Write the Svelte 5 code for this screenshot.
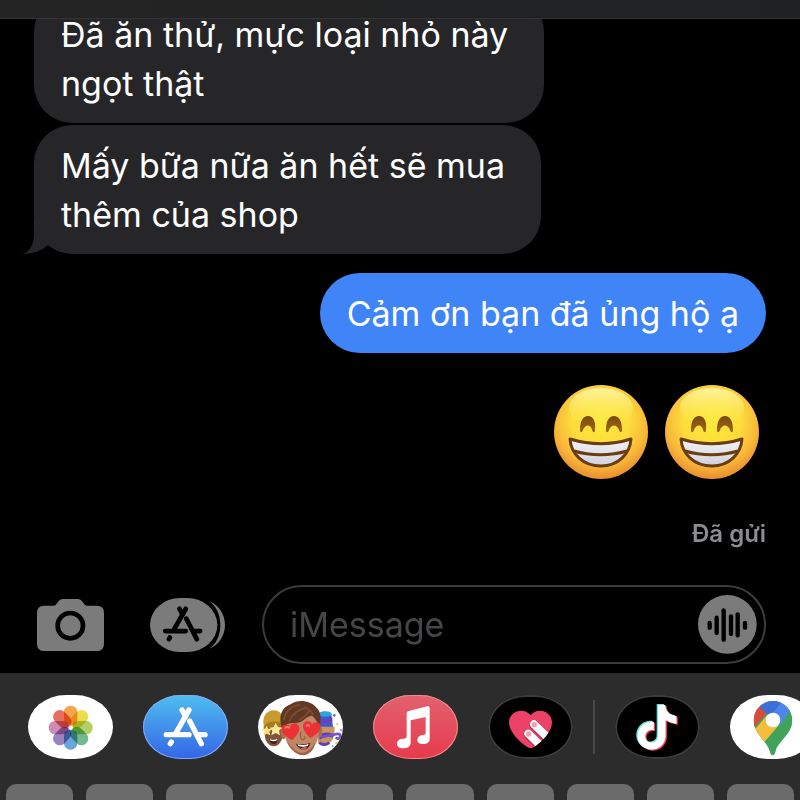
<script>
    const messages = [
        { from: 'them', lines: ['Đã ăn thử, mực loại nhỏ này', 'ngọt thật'] },
        { from: 'them', lines: ['Mấy bữa nữa ăn hết sẽ mua', 'thêm của shop'], tail: true },
        { from: 'me', lines: ['Cảm ơn bạn đã ủng hộ ạ'] }
    ];

    const petals = ['#f59a36', '#ecd93c', '#abca58', '#62b283', '#5b9bd5', '#8e76b4', '#c87fae', '#e65f4c'];

    // x, top, bottom of each bar in the audio glyph
    const wave = [[35, 84, 98], [56, 68, 114], [77, 46, 134], [99, 64, 117], [119, 58, 121], [141, 84, 98]];

    const keys = 'QWERTYUIOP'.split('');

    const note = 'M12.525.02c1.31-.02 2.61-.01 3.91-.02.08 1.53.63 3.09 1.75 4.17 1.12 1.11 2.7 1.62 4.24 1.79v4.03c-1.44-.05-2.89-.35-4.2-.97-.57-.26-1.1-.59-1.62-.93-.01 2.92.01 5.84-.02 8.75-.08 1.4-.54 2.79-1.35 3.94-1.31 1.92-3.58 3.17-5.91 3.21-1.43.08-2.86-.31-4.08-1.03-2.02-1.19-3.44-3.37-3.65-5.71-.02-.5-.03-1-.01-1.49.18-1.9 1.12-3.72 2.58-4.96 1.66-1.44 3.98-2.13 6.15-1.72.02 1.48-.04 2.96-.04 4.44-.99-.32-2.15-.23-3.02.37-.63.41-1.11 1.04-1.36 1.75-.21.51-.15 1.07-.14 1.61.24 1.64 1.82 3.02 3.5 2.87 1.12-.01 2.19-.66 2.77-1.61.19-.33.4-.67.41-1.06.1-1.79.06-3.57.07-5.36.01-4.03-.01-8.05.02-12.07z';
    const heart = 'M0 22C-8 16-24 4-24-9C-24-18-18-23-12-23C-6-23-2-20 0-15C2-20 6-23 12-23C18-23 24-18 24-9C24 4 8 16 0 22Z';

    let draft = $state('');
</script>

{#snippet storeMark()}
    <g fill="none" stroke="currentColor" stroke-width="16" stroke-linecap="round">
        <path d="M138 45L100 112" />
        <path d="M117 45L128 64" />
        <path d="M140 78L175 146" />
        <path d="M70 119H138" />
        <path d="M168 119H186" />
        <path d="M85 141L82 146" />
    </g>
{/snippet}

{#snippet grin()}
    <svg class="grin" viewBox="0 0 94 94" role="img" aria-label="😁">
        <defs>
            <radialGradient id="face" cx="50%" cy="38%" r="62%">
                <stop offset="0" stop-color="#fde93a" />
                <stop offset="0.5" stop-color="#fddc3c" />
                <stop offset="0.78" stop-color="#f8b838" />
                <stop offset="1" stop-color="#e98c30" />
            </radialGradient>
            <linearGradient id="shine" x2="0" y2="1">
                <stop offset="0" stop-color="#fff8b8" stop-opacity="0.8" />
                <stop offset="1" stop-color="#ffee4a" stop-opacity="0" />
            </linearGradient>
            <linearGradient id="eye" x2="0" y2="1">
                <stop offset="0" stop-color="#7a4a0e" />
                <stop offset="1" stop-color="#a0661a" />
            </linearGradient>
            <linearGradient id="teeth" x2="0" y2="1">
                <stop offset="0" stop-color="#f4f4f8" />
                <stop offset="1" stop-color="#cfd0de" />
            </linearGradient>
        </defs>
        <circle cx="47" cy="47" r="47" fill="url(#face)" />
        <ellipse cx="47" cy="23" rx="32" ry="20" fill="url(#shine)" />
        <g fill="url(#eye)">
            <path d="M26 45C26 36 29 31 34 31C39 31 42 36 41 45C41 48 39 48 38 45C37 39 31 39 29 45C28 48 26 48 26 45Z" />
            <path d="M52 45C52 36 55 31 60 31C65 31 68 36 68 45C68 48 66 48 65 45C63 39 57 39 55 45C54 48 52 48 52 45Z" />
        </g>
        <path d="M16 54C36 60 58 60 77 54C76 69 64 81 47 81C29 81 17 69 16 54Z" fill="url(#teeth)" stroke="#6a3c0e" stroke-width="3" stroke-linejoin="round" />
        <path d="M20 66C36 71 57 71 73 66" fill="none" stroke="#6a3c0e" stroke-width="3" />
    </svg>
{/snippet}

<div class="phone">
    <header></header>

    <main>
        {#each messages as msg}
            <p class={['bubble', msg.from]}>
                {#each msg.lines as line}
                    <span>{line}</span>
                {/each}
                {#if msg.tail}
                    <svg class="tail" viewBox="0 0 26 34" aria-hidden="true">
                        <path d="M12 0V14C12 24 8 32 0 34C10 34 20 31 26 25V0Z" fill="#262628" />
                    </svg>
                {/if}
            </p>
        {/each}
        <div class="emoji">
            {@render grin()}
            {@render grin()}
        </div>
        <p class="status">Đã gửi</p>
    </main>

    <form class="composer" onsubmit={(e) => e.preventDefault()}>
        <button type="button" class="camera" aria-label="Camera">
            <svg viewBox="0 0 201 156" width="67" height="52">
                <path d="M22 20H50C60 20 62 2 76 0H124C138 2 140 20 150 20H179Q201 20 201 42V134Q201 156 179 156H22Q0 156 0 134V42Q0 20 22 20Z" fill="#7b7b7b" />
                <circle cx="100" cy="80" r="38" fill="none" stroke="#000" stroke-width="14" />
            </svg>
        </button>
        <button type="button" class="drawer" aria-label="Apps">
            <svg viewBox="0 0 225 162" width="75" height="54">
                <rect width="202" height="162" rx="90" ry="81" fill="#7b7b7b" />
                <path d="M177 9C205 20 225 48 225 81C225 114 205 142 177 153C199 138 211 112 211 81C211 50 199 24 177 9Z" fill="#7b7b7b" />
                <g transform="translate(-17 -8) scale(0.9)">{@render storeMark()}</g>
            </svg>
        </button>
        <div class="field">
            <input type="text" placeholder="iMessage" aria-label="iMessage" bind:value={draft} />
            <button type="button" class="audio" aria-label="Audio">
                <svg viewBox="0 0 177 177" width="59" height="59">
                    <circle cx="88" cy="88" r="88" fill="#7b7b7b" />
                    {#each wave as [x, top, bottom]}
                        <path d="M{x} {top}V{bottom}" stroke="#000" stroke-width="13" stroke-linecap="round" />
                    {/each}
                </svg>
            </button>
        </div>
    </form>

    <nav class="tray">
        <button class="app white" aria-label="Photos">
            <svg viewBox="0 0 255 192">
                {#each petals as color, i}
                    <rect class="petal" x="-20" y="-66" width="40" height="60" rx="19" fill={color} transform="translate(128 98) rotate({i * 45})" />
                {/each}
            </svg>
        </button>
        <button class="app store" aria-label="App Store">
            <svg viewBox="0 0 255 192">{@render storeMark()}</svg>
        </button>
        <button class="app white" aria-label="Memoji">
            <svg viewBox="0 0 255 192">
                <!-- left friend: beanie and star eyes -->
                <ellipse cx="47" cy="118" rx="27" ry="36" fill="#80523a" />
                <path d="M17 91C12 62 28 46 48 46C66 46 78 60 78 91C58 82 36 82 17 91Z" fill="#c99a2e" />
                <path d="M17 92C34 77 60 76 78 87V99C58 91 34 93 17 104Z" fill="#a97b22" />
                <path d="M26 92l5 9 11 1-8 8 3 11-11-5-9 5 1-11-7-8 10-1z" fill="#ffe27a" />
                <path d="M53 84l7 12 13 2-10 9 3 14-13-7-13 7 3-14-9-9 13-2z" fill="#ffe995" />
                <path d="M33 132Q47 139 60 131Q56 148 46 147Q36 145 33 132Z" fill="#35201a" />
                <path d="M36 134Q47 140 58 133" stroke="#fff" stroke-width="4" fill="none" />
                <!-- right friend: party hat and horn -->
                <path d="M180 96V56C194 48 212 49 220 57L225 96Z" fill="#4259c8" />
                <ellipse cx="202" cy="57" rx="19" ry="8" fill="#2aa7e0" />
                <path d="M180 68Q204 80 223 67V79Q204 88 180 80Z" fill="#6a3fc0" />
                <path d="M180 95H230Q232 138 206 150L180 145Z" fill="#c8955d" />
                <path d="M184 118Q208 106 228 119L224 128Q207 121 184 134Z" fill="#5d3db4" />
                <path d="M190 126L231 118Q250 113 246 127Q241 135 233 127" fill="none" stroke="#7650cf" stroke-width="8" />
                <path d="M184 143Q198 155 214 143" stroke="#6542b3" stroke-width="9" fill="none" />
                <circle cx="229" cy="61" r="4" fill="#3c7ddd" />
                <circle cx="238" cy="88" r="3" fill="#efb44a" />
                <circle cx="236" cy="145" r="4" fill="#e7c24e" />
                <circle cx="224" cy="154" r="3" fill="#69a7e8" />
                <circle cx="249" cy="105" r="3" fill="#9a75da" />
                <!-- centre: brown hair and heart eyes -->
                <ellipse cx="77" cy="115" rx="10" ry="17" fill="#a86c50" />
                <ellipse cx="185" cy="111" rx="8" ry="17" fill="#a86c50" />
                <path d="M78 80Q75 130 94 155Q112 180 134 180Q156 177 171 151Q186 126 184 75Q130 37 78 80Z" fill="#c08766" />
                <path d="M88 139Q108 173 133 174Q160 169 172 142Q168 169 148 178Q132 185 114 173Q94 160 88 139Z" fill="#9c6246" />
                <path d="M71 99C61 65 70 37 98 28C123 11 158 18 174 37C190 50 190 73 185 99C179 83 174 70 161 62C135 68 142 80 114 84C101 85 83 82 79 99Z" fill="#613823" />
                <path d="M78 76C80 51 97 35 126 28M94 79C102 55 119 44 146 37M123 75C137 71 148 55 155 46M167 59Q154 42 139 35" fill="none" stroke="#7f4d30" stroke-width="5" />
                <path d="M128 110Q126 131 132 134Q142 134 140 124" fill="none" stroke="#9a5d42" stroke-width="4" />
                <path d={heart} fill="#ed3236" transform="translate(99 112) rotate(-8) scale(1.1)" />
                <path d={heart} fill="#ed3236" transform="translate(160 105) rotate(8) scale(1.1)" />
                <path d="M82 99Q87 92 93 98M145 92Q149 88 154 93" fill="none" stroke="#ff817c" stroke-width="5" stroke-linecap="round" />
                <path d="M113 146Q134 151 157 144Q153 164 137 164Q122 163 113 146Z" fill="#4c1d19" />
                <path d="M118 148Q136 153 152 147L149 153Q135 157 121 153Z" fill="#fff" />
                <path d="M128 161Q138 153 148 158Q143 164 135 164Z" fill="#d36164" />
            </svg>
        </button>
        <button class="app music" aria-label="Music">
            <svg viewBox="0 0 255 192">
                <path d="M101 55Q101 49 107 48L163 34Q170 32 170 39V132C170 142 162 147 151 147C139 148 133 142 133 134C134 124 142 120 153 119C157 118 158 117 158 113V66L113 76V143C113 155 103 160 90 160C78 160 71 154 72 145C73 135 81 131 93 131C99 130 101 128 101 124Z" fill="#fff" />
            </svg>
        </button>
        <button class="app black" aria-label="Digital Touch">
            <svg viewBox="0 0 255 192">
                <defs>
                    <clipPath id="heart-clip">
                        <path d="M128 160C118 160 63 119 63 82C63 50 105 34 128 60C150 34 192 50 192 82C192 119 138 160 128 160Z" />
                    </clipPath>
                </defs>
                <g clip-path="url(#heart-clip)">
                    <rect x="60" y="40" width="136" height="124" fill="#ec4268" />
                    <path d="M138 90L190 140M121 118L166 162" stroke="#b92c4e" stroke-width="29" stroke-linecap="round" />
                    <path d="M138 88L190 138M121 116L166 160" stroke="#fff" stroke-width="24" stroke-linecap="round" />
                </g>
                <circle cx="139" cy="89" r="8" fill="#eda0b2" />
                <circle cx="122" cy="117" r="8" fill="#eda0b2" />
            </svg>
        </button>
        <span class="divider"></span>
        <button class="app black" aria-label="TikTok">
            <svg viewBox="0 0 255 192">
                <path d={note} fill="#64e8e4" transform="translate(55 27) scale(5.6)" />
                <path d={note} fill="#ee3457" transform="translate(63 33) scale(5.6)" />
                <path d={note} fill="#fff" transform="translate(59 30) scale(5.6)" />
            </svg>
        </button>
        <button class="app white" aria-label="Google Maps">
            <svg viewBox="0 0 255 192">
                <defs>
                    <clipPath id="pin-clip">
                        <path d="M128 181C123 181 121 176 119 168C111 138 71 118 71 76A58 58 0 0 1 187 76C187 118 145 138 137 168C135 176 133 181 128 181Z" />
                    </clipPath>
                </defs>
                <g clip-path="url(#pin-clip)">
                    <rect x="65" y="10" width="130" height="175" fill="#41a25a" />
                    <path d="M65 114L129 40L160 74L106 138L90 150Z" fill="#f4bd3d" />
                    <path d="M60 112L129 32L82 30L60 50Z" fill="#da4b3d" />
                    <path d="M93 40L120 66L165 14H80Z" fill="#3d6fd6" />
                    <path d="M118 68L159 15H195V25L149 93Z" fill="#4f86ec" />
                </g>
                <circle cx="129" cy="75" r="22" fill="#fff" />
            </svg>
        </button>
    </nav>

    <div class="keyboard">
        {#each keys as key}
            <button class="key" aria-label={key}></button>
        {/each}
    </div>
</div>

<style>
    :global(body) {
        background: #000;
    }
    .phone {
        background: #000;
        color: #fff;
        display: flex;
        flex-direction: column;
        font-family: Inter, "Noto Sans", sans-serif;
        height: 100vh;
        overflow: hidden;
    }
    button {
        background: none;
        border: 0;
        color: #000;
        cursor: pointer;
        flex-shrink: 0;
        padding: 0;
    }
    svg {
        display: block;
    }
    p {
        margin: 0;
    }
    header {
        background: linear-gradient(90deg, #242424, #202123);
        border-bottom: 1px solid #343436;
        flex-shrink: 0;
        height: 18px;
    }
    main {
        display: flex;
        flex: 1;
        flex-direction: column;
        justify-content: flex-end;
        min-height: 0;
        overflow: hidden;
        padding: 0 34px 24px;
    }
    .bubble {
        border-radius: 38px;
        flex-shrink: 0;
        font-size: 34px;
        line-height: 49px;
        padding: 16px 27px 15px;
        position: relative;
    }
    .bubble > span {
        display: block;
    }
    .them {
        align-self: flex-start;
        background: #262628;
        margin-bottom: 2px;
        padding-right: 36px;
    }
    .me {
        align-self: flex-end;
        background: #4085f7;
        border-radius: 40px;
        margin-top: 17px;
    }
    .tail {
        bottom: 0;
        height: 34px;
        left: -12px;
        position: absolute;
        width: 26px;
    }
    .emoji {
        display: flex;
        flex-shrink: 0;
        gap: 17px;
        justify-content: flex-end;
        padding: 32px 7px 40px;
    }
    .grin {
        height: 94px;
        width: 94px;
    }
    .status {
        color: #8c8c91;
        font-size: 24px;
        font-weight: 600;
        line-height: 30px;
        text-align: right;
    }
    .composer {
        align-items: center;
        display: flex;
        flex-shrink: 0;
        padding: 12px 34px 9px 37px;
    }
    .drawer {
        margin: 0 37px 0 46px;
    }
    .field {
        align-items: center;
        border: 2px solid #3b3b3e;
        border-radius: 40px;
        box-sizing: border-box;
        display: flex;
        flex: 1;
        height: 79px;
        min-width: 0;
        padding: 0 7px 0 26px;
    }
    input {
        background: none;
        border: 0;
        color: #fff;
        flex: 1;
        font: inherit;
        font-size: 34px;
        min-width: 0;
        outline: 0;
        padding: 0;
    }
    input::placeholder {
        color: #464649;
        opacity: 1;
    }
    .tray {
        align-items: center;
        background: #2c2c2c;
        display: flex;
        flex-shrink: 0;
        gap: 30px;
        overflow: hidden;
        padding: 22px 0 25px 28px;
    }
    .app {
        border-radius: 38px / 32px;
        height: 64px;
        overflow: hidden;
        width: 85px;
    }
    .app > svg {
        height: 64px;
        width: 85px;
    }
    .white {
        background: #fff;
    }
    .black {
        background: #000;
        box-shadow: inset 0 0 0 2px #3c3c3d;
    }
    .store {
        background: linear-gradient(#4fbdf0, #3465e6);
        box-shadow: inset 0 0 0 1px #86a9ee;
        color: #fff;
    }
    .music {
        background: linear-gradient(#e2626f, #e73a4c);
        box-shadow: inset 0 0 0 1px #ee8a94;
    }
    .petal {
        mix-blend-mode: multiply;
        opacity: 0.9;
    }
    .divider {
        background: #4a4a4a;
        flex-shrink: 0;
        height: 54px;
        margin: 0 -10px;
        width: 2px;
    }
    .keyboard {
        background: #2c2c2c;
        display: grid;
        flex-shrink: 0;
        gap: 13px;
        grid-template-columns: repeat(10, 1fr);
        padding: 0 6px;
    }
    .key {
        background: #6b6b6b;
        border-radius: 10px 10px 0 0;
        height: 16px;
    }
</style>
